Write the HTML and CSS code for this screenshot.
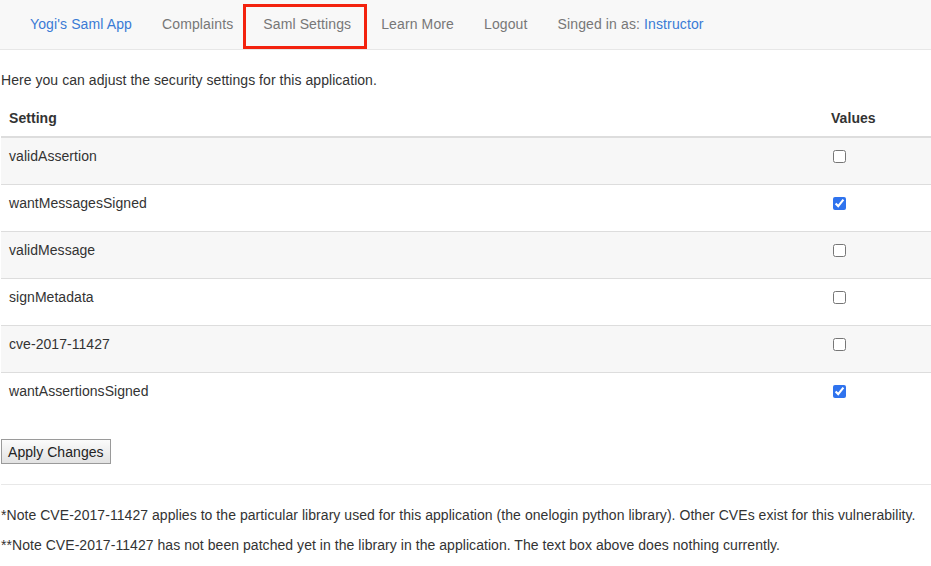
FILE: index.html
```html
<!DOCTYPE html>
<html>
<head>
<meta charset="utf-8">
<title>Saml Settings</title>
<link rel="stylesheet" href="styles.css">
</head>
<body>
<nav class="navbar">
  <a class="brand" href="#">Yogi's Saml App</a>
  <ul class="nav">
    <li><a href="#">Complaints</a></li>
    <li class="marked"><a href="#">Saml Settings</a></li>
    <li><a href="#">Learn More</a></li>
    <li><a href="#">Logout</a></li>
  </ul>
  <p class="navbar-text">Singed in as: <a href="#">Instructor</a></p>
</nav>
<main class="content">
  <p class="intro">Here you can adjust the security settings for this application.</p>
  <form>
    <table class="settings">
      <thead>
        <tr><th>Setting</th><th class="col-values">Values</th></tr>
      </thead>
      <tbody>
        <tr><td>validAssertion</td><td><input type="checkbox"></td></tr>
        <tr><td>wantMessagesSigned</td><td><input type="checkbox" checked></td></tr>
        <tr><td>validMessage</td><td><input type="checkbox"></td></tr>
        <tr><td>signMetadata</td><td><input type="checkbox"></td></tr>
        <tr><td>cve-2017-11427</td><td><input type="checkbox"></td></tr>
        <tr><td>wantAssertionsSigned</td><td><input type="checkbox" checked></td></tr>
      </tbody>
    </table>
    <button type="button" class="apply">Apply Changes</button>
  </form>
  <hr class="divider">
  <p class="note">*Note CVE-2017-11427 applies to the particular library used for this application (the onelogin python library). Other CVEs exist for this vulnerability.</p>
  <p class="note">**Note CVE-2017-11427 has not been patched yet in the library in the application. The text box above does nothing currently.</p>
</main>
</body>
</html>
```
FILE: styles.css
```css
* { box-sizing: border-box; }
html, body {
  margin: 0;
  padding: 0;
  background: #fff;
}
body {
  font-family: "Liberation Sans", Arial, Helvetica, sans-serif;
  font-size: 14px;
  line-height: 20px;
  letter-spacing: 0.05px;
  color: #333;
}
a { text-decoration: none; }

.navbar {
  display: flex;
  align-items: flex-start;
  height: 50px;
  padding: 0 15px;
  background: #f8f8f8;
  border-bottom: 1px solid #e7e7e7;
  margin-bottom: 20px;
  letter-spacing: 0.12px;
}
.brand {
  display: block;
  padding: 14px 15px 15px;
  color: #3a7bd5;
}
.nav {
  display: flex;
  list-style: none;
  margin: 0;
  padding: 0;
}
.nav li { position: relative; }
.nav a {
  display: block;
  padding: 14px 15px 15px;
  color: #777;
}
.nav li.marked::after {
  content: "";
  position: absolute;
  left: -5px;
  right: -1px;
  top: 4px;
  bottom: 0;
  border: 3px solid #f3220e;
  pointer-events: none;
}
.navbar-text {
  margin: 14px 0 0 15px;
  color: #777;
}
.navbar-text a { color: #3a7bd5; }

.content { padding-left: 1px; }
.intro { margin: 0 0 10px; }

.settings {
  width: 100%;
  border-collapse: collapse;
  border-spacing: 0;
  margin-bottom: 20px;
}
.settings th {
  text-align: left;
  font-weight: bold;
  padding: 8px;
  border-bottom: 2px solid #ddd;
}
.settings .col-values { width: 108px; }
.settings td {
  padding: 8px 8px 18px;
  border-top: 1px solid #ddd;
  vertical-align: top;
}
.settings tbody tr:first-child td { border-top: 0; }
.settings tbody tr:nth-child(odd) { background: #f7f7f7; }
.settings input[type="checkbox"] {
  display: block;
  margin: 4px 0 3px 2px;
  width: 13px;
  height: 13px;
  accent-color: #2f73ee;
}

.apply {
  display: block;
  height: 25px;
  margin: 0;
  padding: 0 6px;
  font-family: inherit;
  font-size: 14px;
  letter-spacing: 0.05px;
  color: #222;
  background: linear-gradient(#fbfbfb, #e2e2e2);
  border: 1px solid #9a9a9a;
  border-radius: 0;
}

.divider {
  margin: 20px 0;
  border: 0;
  border-top: 1px solid #e8e8e8;
}
.note { margin: 0 0 10px; }
```
